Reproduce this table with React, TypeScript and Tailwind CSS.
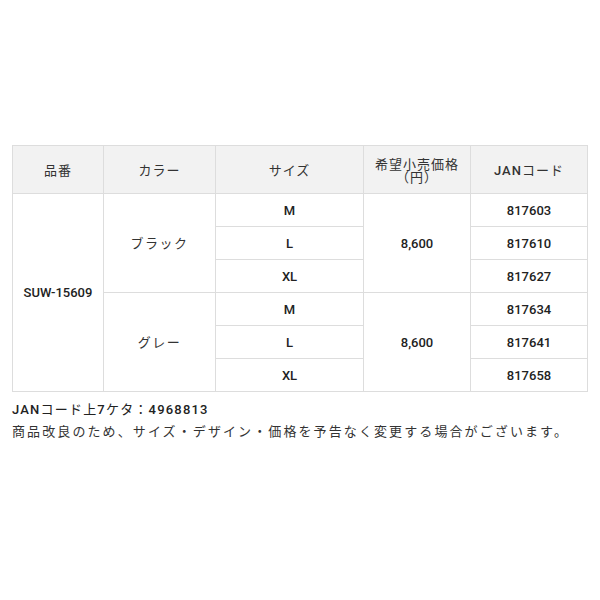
import React from "react";

const jp = { fontFamily: '"Noto Sans CJK JP", "Noto Sans", sans-serif' };
const lat = "font-['Roboto','Noto_Sans_CJK_JP',sans-serif] font-medium";

function Lat({ children }: { children: React.ReactNode }) {
  return <span className={lat}>{children}</span>;
}

const rows = [
  { color: "ブラック", size: "M", jan: "817603" },
  { color: "ブラック", size: "L", jan: "817610" },
  { color: "ブラック", size: "XL", jan: "817627" },
  { color: "グレー", size: "M", jan: "817634" },
  { color: "グレー", size: "L", jan: "817641" },
  { color: "グレー", size: "XL", jan: "817658" },
];

export default function App() {
  const th =
    "border border-[#dddddd] bg-[#f2f2f2] font-normal text-[13px] text-[#333] tracking-[1px] text-center align-middle leading-[13px] p-0";
  const td = "border border-[#dddddd] text-center align-middle p-0 text-[13px] text-[#222]";
  return (
    <div className="w-[600px] h-[600px] bg-white pt-[145px] px-[12px]" style={jp}>
      <table className="border-collapse table-fixed w-[575px]">
        <colgroup>
          <col className="w-[91px]" />
          <col className="w-[112px]" />
          <col className="w-[148px]" />
          <col className="w-[107px]" />
          <col className="w-[117px]" />
        </colgroup>
        <thead>
          <tr className="h-[48px]">
            <th className={th}>品番</th>
            <th className={th}>カラー</th>
            <th className={th}>サイズ</th>
            <th className={th}>
              希望小売価格
              <br />
              （円）
            </th>
            <th className={th}>
              <Lat>JAN</Lat>コード
            </th>
          </tr>
        </thead>
        <tbody>
          {rows.map((r, i) => (
            <tr key={i} className="h-[33px]">
              {i === 0 && (
                <td rowSpan={6} className={td}>
                  <Lat>SUW-15609</Lat>
                </td>
              )}
              {i % 3 === 0 && (
                <td rowSpan={3} className={td + " tracking-[1.5px] text-[12px] text-[#333]"}>
                  {r.color}
                </td>
              )}
              <td className={td}>
                <Lat>{r.size}</Lat>
              </td>
              {i % 3 === 0 && (
                <td rowSpan={3} className={td}>
                  <Lat>8,600</Lat>
                </td>
              )}
              <td className={td}>
                <Lat>{r.jan}</Lat>
              </td>
            </tr>
          ))}
        </tbody>
      </table>
      <div className="mt-[6px] text-[13px] leading-[21px] text-[#222]">
        <div className="tracking-[1.2px]">
          <Lat>JAN</Lat>コード上<Lat>7</Lat>ケタ：<Lat>4968813</Lat>
        </div>
        <div className="tracking-[2.1px] text-[#333]">
          商品改良のため、サイズ・デザイン・価格を予告なく変更する場合がございます。
        </div>
      </div>
    </div>
  );
}
